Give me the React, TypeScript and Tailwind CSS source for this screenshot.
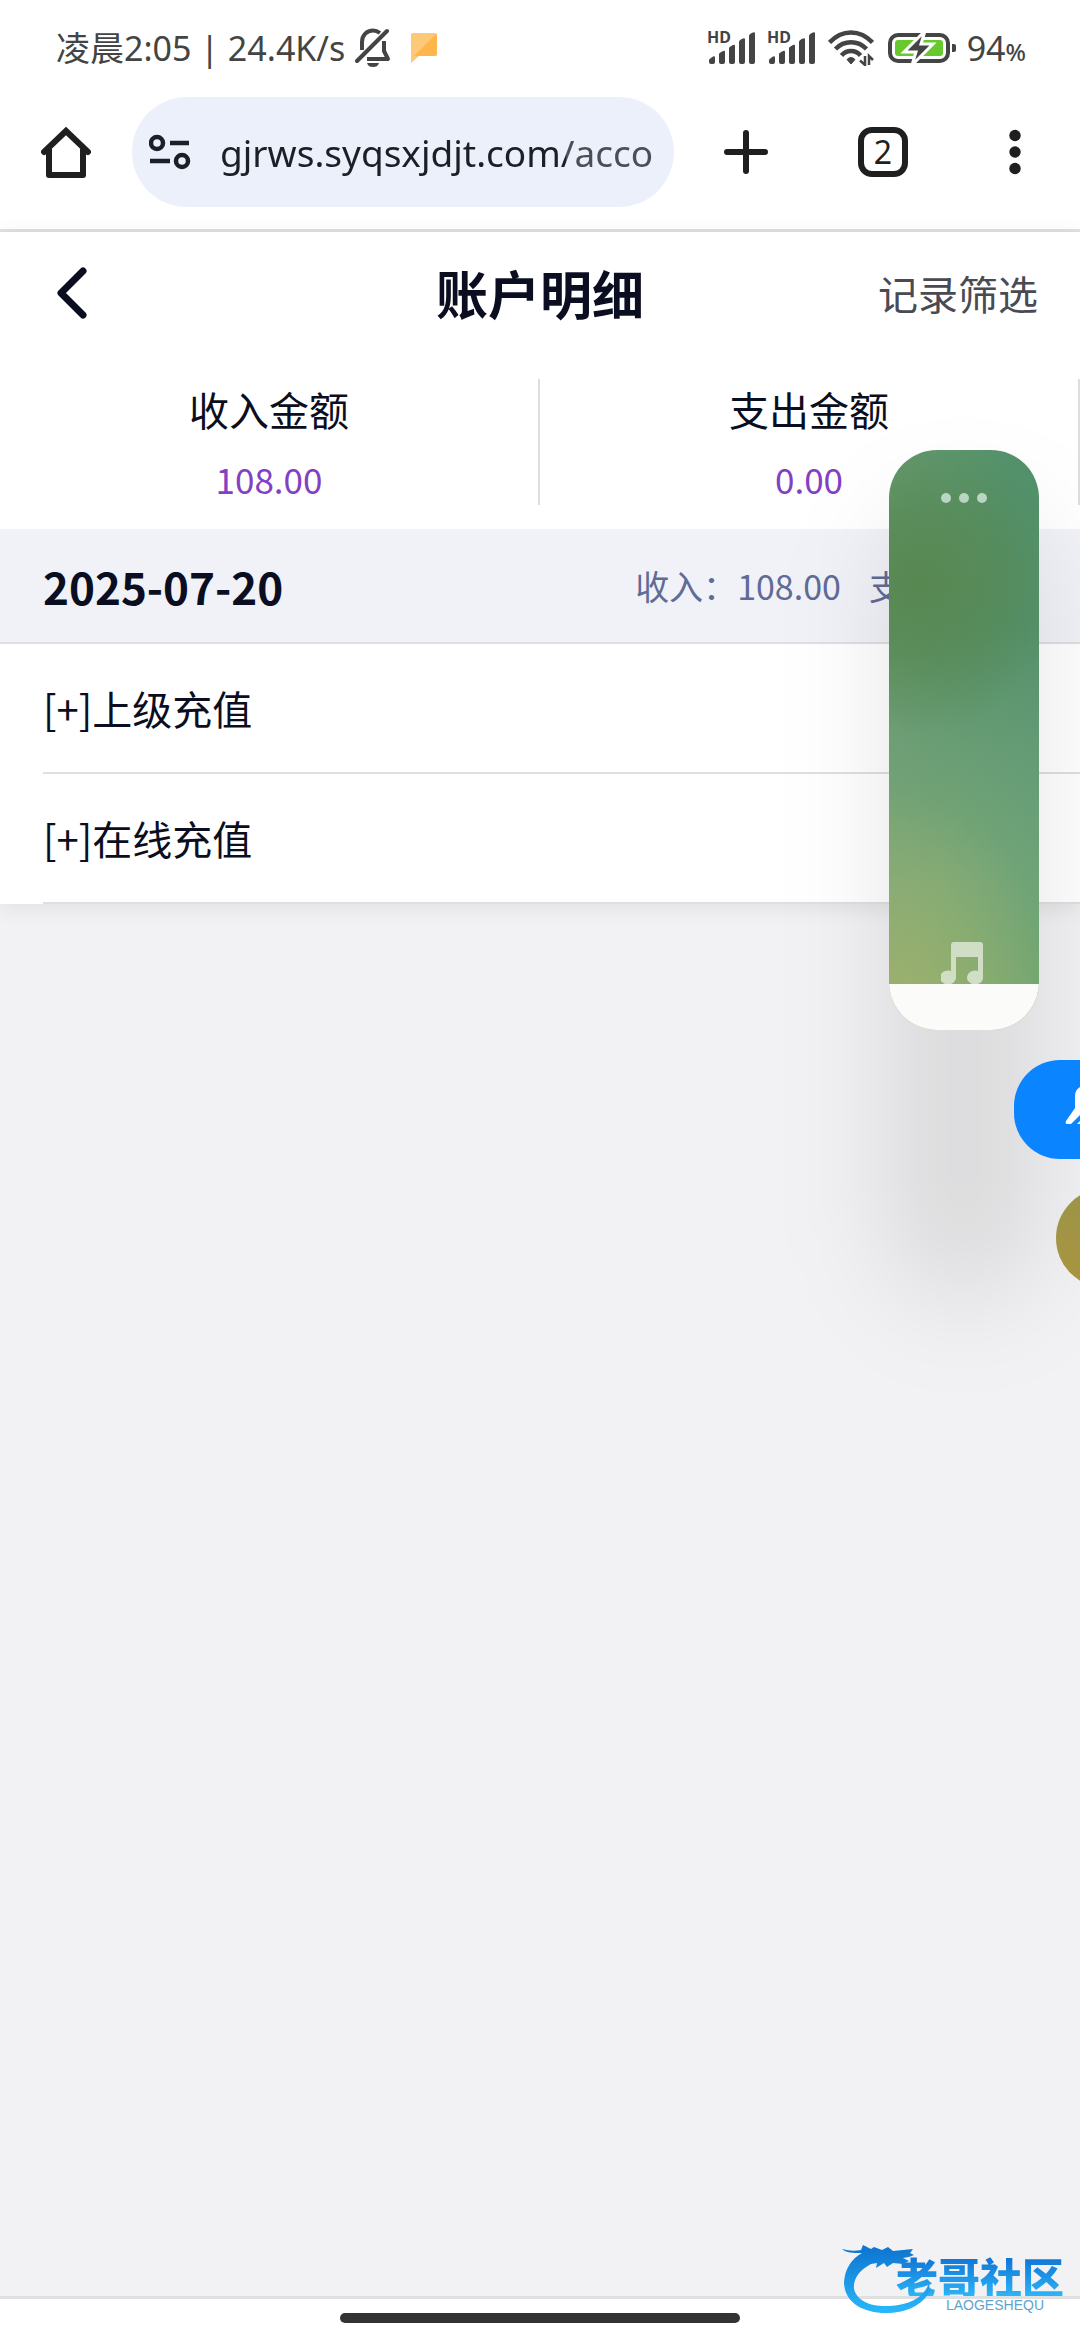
import React, { useState } from 'react';

interface DayRecord {
  date: string;
  income: string;
  expense: string;
  items: string[];
}

const SUMMARY = [
  { label: '收入金额', value: '108.00' },
  { label: '支出金额', value: '0.00' },
];

const DAYS: DayRecord[] = [
  { date: '2025-07-20', income: '108.00', expense: '0.00', items: ['上级充值', '在线充值'] },
];

const BellOffIcon = () => (
  <svg width="36" height="40" viewBox="0 0 36 40" fill="none" stroke="#444" strokeWidth="4">
    <path d="M7 22V14C7 7 12 2.500 18 2.500c3 0 5 1 7 2.500" />
    <path d="M29 13v10l4 8H12" strokeLinejoin="round" />
    <path d="M2 33 32 3" strokeLinecap="round" />
    <path d="M12 35h12c-1 3-3 4-6 4s-5-1-6-4Z" fill="#444" stroke="none" />
  </svg>
);

const MessageIcon = () => (
  <svg width="26" height="30" viewBox="0 0 26 30">
    <path d="M2 0h22a2 2 0 0 1 2 2v19a2 2 0 0 1-2 2H8l-8 7V2a2 2 0 0 1 2-2Z" fill="#fdc878" />
    <path d="M25 1a2 2 0 0 1 1 1v19a2 2 0 0 1-2 2H3Z" fill="#feb54a" />
  </svg>
);

const SignalIcon = () => (
  <svg width="50" height="54" viewBox="0 -10 50 54" fill="#444">
    <text x="1" y="12" fontSize="16" fontWeight="700" fontFamily="Noto Sans, sans-serif">HD</text>
    <path d="M3 29q0-1 4-3.500 2-1 2 1V31q0 2-2 2H5q-2 0-2-2Z" />
    <path d="M13 23q0-1 4-3 2-1 2 1v10q0 2-2 2h-2q-2 0-2-2Z" />
    <path d="M23 17q0-1 4-3 2-1 2 1v16q0 2-2 2h-2q-2 0-2-2Z" />
    <path d="M33 11q0-2 4-3.500 2-1 2 1V31q0 2-2 2h-2q-2 0-2-2Z" />
    <path d="M43 5q0-2 4-3.500 2-1 2 1V31q0 2-2 2h-2q-2 0-2-2Z" />
  </svg>
);

const WifiIcon = () => (
  <svg width="46" height="36" viewBox="0 0 46 36" fill="none" stroke="#444" strokeWidth="4.500">
    <path d="M1.500 12.500C14-1 32-1 44.500 12.500" />
    <path d="M7.500 19C16 10 30 10 38.500 19" />
    <path d="M13.500 25.500c5-6 14-6 19 0" />
    <path d="M19 29.500q4-4 8 0L23 34Z" fill="#444" strokeWidth="1" />
    <path d="M37 26v9l-5-4.500M41 35v-9l4 4" strokeWidth="2.500" />
  </svg>
);

const BatteryIcon = () => (
  <svg width="69" height="34" viewBox="0 0 69 34">
    <rect x="2" y="4" width="58" height="26" rx="8" fill="none" stroke="#444" strokeWidth="4" />
    <rect x="7" y="9" width="48" height="16" rx="3" fill="#67c92d" />
    <path d="M64 13h2q2 0 2 2v4q0 2-2 2h-2Z" fill="#444" />
    <path d="M37 0 16 21h12l-4 13 21-21H33Z" fill="#444" stroke="#fff" strokeWidth="3" />
  </svg>
);

const HomeIcon = () => (
  <svg width="50" height="52" viewBox="0 0 50 52" fill="none" stroke="#1f1f1f" strokeWidth="6" strokeLinejoin="round">
    <path d="M3 26 25 5l22 21" strokeLinecap="round" strokeLinejoin="miter" />
    <path d="M8 23v26h34V23" />
  </svg>
);

const SiteInfoIcon = () => (
  <svg width="42" height="36" viewBox="0 0 42 36" fill="none" stroke="#1b1f26" strokeWidth="4.500">
    <circle cx="8" cy="9" r="6" />
    <path d="M21 9h19M1 27h20" />
    <circle cx="33" cy="27" r="6" />
  </svg>
);

const StatusBar = () => (
  <div className="flex h-24 items-center pl-14 pr-[54px] text-[34px] text-[#444]">
    <span className="font-['Noto_Sans','Noto_Sans_CJK_SC',sans-serif]">凌晨2:05 | 24.4K/s</span>
    <span className="ml-[10px]"><BellOffIcon /></span>
    <span className="ml-5"><MessageIcon /></span>
    <div className="ml-auto flex items-center">
      <SignalIcon />
      <span className="ml-[10px]"><SignalIcon /></span>
      <span className="ml-3"><WifiIcon /></span>
      <span className="ml-[14px]"><BatteryIcon /></span>
      <span className="ml-[10px] flex items-baseline font-['Noto_Sans',sans-serif]">
        94<span className="text-[24px] font-medium">%</span>
      </span>
    </div>
  </div>
);

const BrowserBar = () => {
  const [address, setAddress] = useState('gjrws.syqsxjdjt.com/account');

  return (
    <div className="flex h-[136px] items-start border-b-[3px] border-[#e0e0e0] pl-[41px] pr-[59px]">
      <button aria-label="主页" className="flex h-[112px] items-center">
        <HomeIcon />
      </button>
      <label className="ml-[41px] mt-px flex h-[110px] flex-1 items-center rounded-full bg-[#ebf0fa] pl-[17px] pr-[22px]">
        <SiteInfoIcon />
        <input
          aria-label="网址"
          value={address}
          onChange={e => setAddress(e.target.value)}
          className="ml-[29px] h-16 w-0 flex-1 bg-linear-to-r from-[#1b1f26] from-80% to-[#4a4e55] to-80% bg-clip-text font-['Noto_Sans',sans-serif] text-[37px] text-transparent outline-none"
        />
      </label>
      <div className="flex h-[112px] items-center">
        <button aria-label="新标签页" className="ml-[50px]">
          <svg width="44" height="44" viewBox="0 0 44 44" stroke="#1f1f1f" strokeWidth="6" strokeLinecap="round">
            <path d="M22 3v38M3 22h38" />
          </svg>
        </button>
        <button
          aria-label="标签页"
          className="ml-[90px] flex size-[50px] items-center justify-center rounded-[14px] border-[6px] border-[#1f1f1f] font-['Noto_Sans',sans-serif] text-[32px] leading-none text-[#1f1f1f]"
        >
          2
        </button>
        <button aria-label="更多" className="ml-[101px]">
          <svg width="12" height="46" viewBox="0 0 12 46" fill="#1f1f1f">
            <circle cx="6" cy="6.500" r="5.700" />
            <circle cx="6" cy="23" r="5.700" />
            <circle cx="6" cy="39.500" r="5.700" />
          </svg>
        </button>
      </div>
    </div>
  );
};

const VolumePanel = () => {
  const [level, setLevel] = useState(8);

  return (
    <>
      {/* Soft shadow behind the panel */}
      <div className="pointer-events-none absolute right-[41px] top-[510px] h-[790px] w-[150px] rounded-[75px] bg-black/10 blur-[54px]" />

      <div className="absolute right-[41px] top-[450px] h-[580px] w-[150px] overflow-hidden rounded-[48px] bg-[radial-gradient(ellipse_140px_150px_at_20%_23%,#578852_0%,#578852b0_45%,#57885200_100%),radial-gradient(ellipse_170px_240px_at_0%_100%,#a0b070_0%,#a0b07000_100%),linear-gradient(100deg,#85a67a66_0%,#85a67a00_50%,#4f937c55_100%),linear-gradient(180deg,#52916a_0%,#548f68_30%,#699d74_52%,#7aa976_75%,#82b068_100%)]">
        <svg className="absolute left-[52px] top-[43px]" width="46" height="10" viewBox="0 0 46 10" fill="#b9d5c3">
          <circle cx="5" cy="5" r="5" />
          <circle cx="23" cy="5" r="5" />
          <circle cx="41" cy="5" r="5" />
        </svg>
        <svg className="absolute left-[52px] top-[492px]" width="42" height="48" viewBox="0 0 42 48" fill="#cfdec4">
          <path d="M13 0h26q3 0 3 3v32a8 7 0 1 1-5-6V15H15v20a8 7 0 1 1-5-6V3q0-3 3-3Z" />
        </svg>
        <div className="absolute inset-x-0 bottom-0 bg-[#fbfbf9]" style={{ height: `${level}%` }} />
        <input
          type="range"
          aria-label="媒体音量"
          value={level}
          onChange={e => setLevel(Number(e.target.value))}
          className="absolute inset-0 size-full opacity-0 [direction:rtl] [writing-mode:vertical-lr]"
        />
      </div>

      <button aria-label="静音" className="absolute right-0 top-[1060px] h-[99px] w-[66px] overflow-hidden rounded-l-[46px] bg-[#0b84ff]">
        <svg className="absolute right-0 top-[26px]" width="15" height="42" viewBox="0 0 15 42" fill="none">
          <path d="M15 1q-5 3-5 9v12L1 35q-1 3 1 3h4l9-9Z" fill="#fff" />
          <path d="m12 38 3-3v3Z" fill="#fff" />
        </svg>
      </button>
      <button aria-label="勿扰" className="absolute right-0 top-[1188px] h-[100px] w-6 overflow-hidden">
        <span className="absolute left-0 top-0 size-[100px] rounded-full bg-linear-to-b from-[#9c9448] to-[#aa943f]" />
      </button>
    </>
  );
};

const Watermark = () => (
  <div className="absolute bottom-[26px] right-4 h-[70px] w-[222px]">
    <svg className="absolute left-0 top-0" width="96" height="70" viewBox="0 0 96 70">
      <defs>
        <linearGradient id="dragon" x1="0" y1="0" x2="0" y2="1">
          <stop offset="0" stopColor="#0d72cf" />
          <stop offset="1" stopColor="#28b8fb" />
        </linearGradient>
      </defs>
      <path
        d="M0 5q10 3 19 1l2-5 8 4 3-2 8 3 6-3 5 4 20-2-3 4 4 2q-6 3-11 3l6 3-6 3-10-1-6 4-3-4-8 5 1-5-6 1C18 26 11 34 12 45c3 12 17 18 35 17 20-1 35-8 40-23l1 8c-8 15-25 22-44 22C19 69 2 57 2 38 3 25 9 15 20 9 11 9 4 9 0 5Z"
        fill="url(#dragon)"
      />
    </svg>
    <div className="flex flex-col items-end">
      <span className="mt-3 bg-linear-to-b from-[#1272d4] to-[#2cb4f8] bg-clip-text text-[42px] font-black leading-[40px] text-transparent">老哥社区</span>
      <span className="mr-5 font-['Liberation_Sans',sans-serif] text-[14px] leading-[18px] text-[#5ba4cf]">LAOGESHEQU</span>
    </div>
  </div>
);

const App: React.FC = () => {
  return (
    <div className="relative flex min-h-screen flex-col overflow-hidden bg-[#f2f2f4] font-['Noto_Sans_CJK_SC',sans-serif] text-[#0b0e20]">
      <div className="bg-white">
        <StatusBar />
        <BrowserBar />
      </div>

      <main className="flex-1">
        <div className="bg-white shadow-[0_4px_20px_rgba(0,0,0,0.08)]">
          {/* Title bar */}
          <header className="grid h-[122px] grid-cols-3 items-center px-[42px]">
            <button aria-label="返回" className="justify-self-start pl-[15px]">
              <svg width="30" height="52" viewBox="0 0 30 52" fill="none" stroke="#0b0e20" strokeWidth="7" strokeLinecap="round" strokeLinejoin="round">
                <path d="M26 4 4 26l22 22" />
              </svg>
            </button>
            <h1 className="text-center text-[52px] font-bold">账户明细</h1>
            <button className="justify-self-end text-[40px] text-[#4a4b52]">记录筛选</button>
          </header>

          {/* Totals */}
          <div className="grid grid-cols-2 pb-6 pt-[25px]">
            {SUMMARY.map(s => (
              <div key={s.label} className="h-[126px] border-r-2 border-[#dedee0] text-center">
                <p className="text-[40px] leading-[60px]">{s.label}</p>
                <p className="mt-3 text-[35px] leading-[56px] text-[#8340c4]">{s.value}</p>
              </div>
            ))}
          </div>

          {DAYS.map(day => (
            <section key={day.date}>
              <div className="flex h-[115px] items-center justify-between border-b-2 border-[#dfdfe2] bg-[#f1f2f8] px-[43px]">
                <h2 className="text-[44px] font-bold leading-[60px]">{day.date}</h2>
                <p className="flex gap-7 text-[34px] text-[#606b96]">
                  <span>收入：{day.income}</span>
                  <span>支出：{day.expense}</span>
                </p>
              </div>
              <ul className="pl-[43px]">
                {day.items.map(item => (
                  <li key={item} className="flex h-[130px] items-center border-b-2 border-[#dfdfe1] text-[40px]">
                    [+]{item}
                  </li>
                ))}
              </ul>
            </section>
          ))}
        </div>
      </main>

      {/* Gesture bar */}
      <footer className="flex h-11 justify-center border-t-[3px] border-[#e0e0e0] bg-white pt-[14px]">
        <div className="h-[10px] w-[400px] rounded-full bg-[#333]" />
      </footer>

      <VolumePanel />
      <Watermark />
    </div>
  );
};

export default App;
